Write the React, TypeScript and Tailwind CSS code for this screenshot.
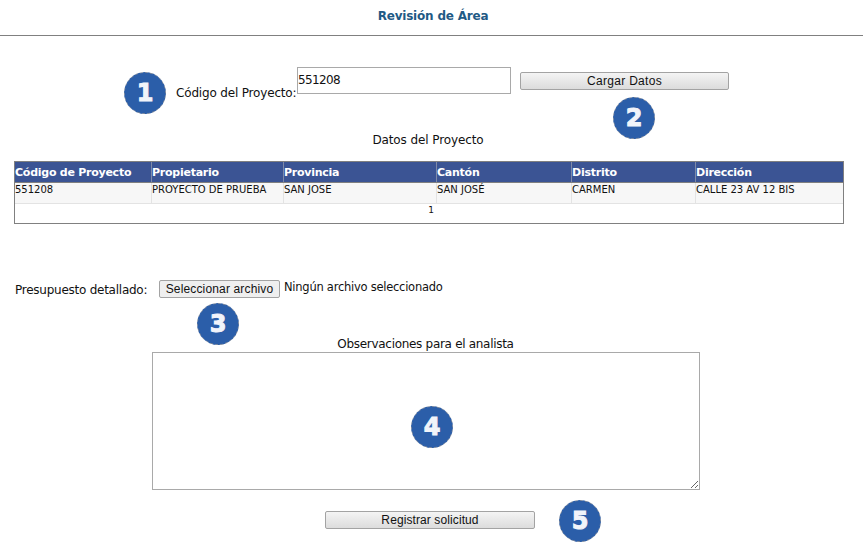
const verdana = "font-['DejaVu_Sans',Verdana,sans-serif]";

function Badge({ n, className }: { n: number; className: string }) {
  return (
    <div
      className={
        "absolute flex h-[42px] w-[42px] items-center justify-center rounded-full border border-dashed border-[#6f7f99] bg-[#2b5ea9] font-['DejaVu_Sans',sans-serif] text-[24px] leading-none font-bold text-[#f1f4fa] [-webkit-text-stroke:1px_#f1f4fa] " +
        className
      }
    >
      {n}
    </div>
  );
}

const btn =
  "h-[18px] rounded-[2px] border border-[#a3a3a3] bg-gradient-to-b from-[#f4f4f4] to-[#dcdcdc] font-['Liberation_Sans',Arial,sans-serif] text-[12px] leading-none text-[#111]";

const cols = ["w-[137px]", "w-[132px]", "w-[153px]", "w-[135px]", "w-[124px]", "w-[148px]"];
const heads = ["Código de Proyecto", "Propietario", "Provincia", "Cantón", "Distrito", "Dirección"];
const cells = ["551208", "PROYECTO DE PRUEBA", "SAN JOSE", "SAN JOSÉ", "CARMEN", "CALLE 23 AV 12 BIS"];

export default function App() {
  return (
    <div className={"relative h-[557px] w-[863px] overflow-hidden bg-white text-[#111] " + verdana}>
      <div className="flex h-[35px] items-center justify-center pb-[3px] pl-[3px] text-[12px] font-bold tracking-[-0.2px] text-[#1f5a85]">
        Revisión de Área
      </div>
      <div className="h-px bg-[#808080]" />

      <div className="mt-[31px] flex h-[27px] items-start pl-[176px]">
        <span className="mt-[19px] w-[121px] text-[12px] leading-[14px] tracking-[-0.17px] whitespace-nowrap">Código del Proyecto:</span>
        <input
          readOnly
          value="551208"
          className="h-[27px] w-[214px] border border-[#a9a9a9] pb-[2px] text-[12px] tracking-[-0.65px] outline-none"
        />
        <button className={btn + " mt-[5px] ml-[9px] w-[209px] tracking-[0.3px]"}>Cargar Datos</button>
      </div>

      <div className="mt-[39px] h-[14px] pr-[7px] text-center text-[12px] leading-[14px] tracking-[-0.1px]">Datos del Proyecto</div>

      <div className="mt-[14px] ml-[14px] w-[830px] border border-[#808080] text-[10px]">
        <div className="flex h-[21px] border-b border-[#808080] bg-[#3b5494] text-[11px] leading-[21px] font-bold tracking-[-0.25px] text-white">
          {heads.map((h, i) => (
            <div key={h} className={cols[i] + " shrink-0 border-r border-[#7f8aa8] whitespace-nowrap last:border-r-0"}>
              {h}
            </div>
          ))}
        </div>
        <div className="flex h-[21px] border-b border-[#e3e3e3] bg-[#f7f7f7] leading-[13px]">
          {cells.map((c, i) => (
            <div key={c} className={cols[i] + " shrink-0 border-r border-[#e3e3e3] whitespace-nowrap last:border-r-0"}>
              {c}
            </div>
          ))}
        </div>
        <div className="h-[19px] pl-[4px] text-center text-[9px] leading-[13px]">1</div>
      </div>

      <div className="mt-[56px] flex h-[18px] items-start pl-[15px] text-[12px] leading-[14px]">
        <span className="mt-[3px] w-[144px] tracking-[-0.25px] whitespace-nowrap">Presupuesto detallado:</span>
        <button className="h-[18px] w-[121px] rounded-[2px] border border-[#a3a3a3] bg-[#efefef] font-['Liberation_Sans',Arial,sans-serif] text-[12px] leading-none tracking-[0.15px]">
          Seleccionar archivo
        </button>
        <span className="ml-[4px] text-[11.5px] tracking-[-0.25px] whitespace-nowrap">Ningún archivo seleccionado</span>
      </div>

      <div className="mt-[39px] h-[15px] pr-[12px] text-center text-[12px] leading-[14px] tracking-[-0.3px]">Observaciones para el analista</div>
      <textarea readOnly className="ml-[152px] block h-[138px] w-[548px] resize-y border border-[#a9a9a9] outline-none" />

      <div className="mt-[21px] pl-[325px]">
        <button className={btn + " block w-[210px] tracking-[0.1px]"}>Registrar solicitud</button>
      </div>

      <Badge n={1} className="top-[72px] left-[124px]" />
      <Badge n={2} className="top-[97px] left-[613px]" />
      <Badge n={3} className="top-[303px] left-[197px]" />
      <Badge n={4} className="top-[406px] left-[411px]" />
      <Badge n={5} className="top-[500px] left-[559px]" />
    </div>
  );
}
